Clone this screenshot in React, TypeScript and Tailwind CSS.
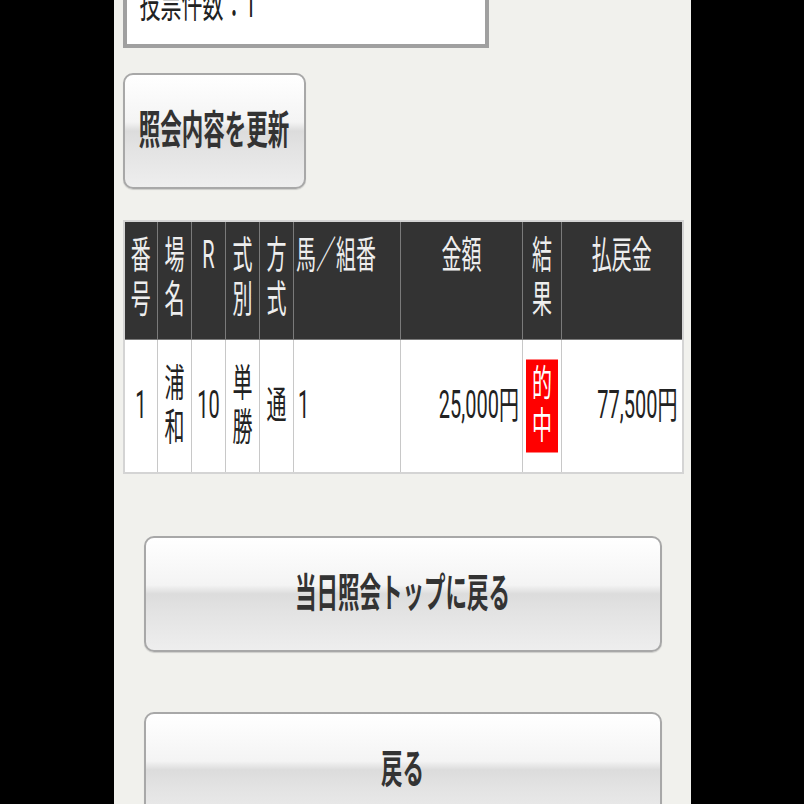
import React from 'react';

const font = "font-[Roboto,'Noto_Sans_CJK_JP',sans-serif]";

const btn =
  'flex items-center justify-center rounded-[10px] border-2 border-[#a8a8a8] bg-[linear-gradient(180deg,#ffffff_0%,#f4f4f4_42%,#dcdcdc_50%,#e3e3e3_66%,#eeeeee_100%)] shadow-[0_1px_1px_rgba(0,0,0,0.15)]';

function Label({ text }: { text: string }) {
    return (
        <span className="inline-block scale-y-[1.85] text-[21.5px] font-bold leading-[24px] text-[#333]">
            {text}
        </span>
    );
}

function Head({ children, align = 'text-center' }: { children: React.ReactNode; align?: string }) {
    return (
        <th className={`border border-[#7a7a7a] bg-[#333333] p-0 pt-[12px] align-top font-normal text-[#eeeeee] ${align}`}>
            <div className="origin-top scale-y-[1.9] text-[20px] leading-[23px]">{children}</div>
        </th>
    );
}

function Cell({ children, align = 'text-center', pad = '' }: { children: React.ReactNode; align?: string; pad?: string }) {
    return (
        <td className={`border border-[#c8c8c8] bg-white p-0 align-middle ${align} ${pad}`}>
            <div className="scale-y-[1.9] text-[20px] leading-[23px] text-[#222]">{children}</div>
        </td>
    );
}

export default function App() {
    return (
        <div className={`flex h-[804px] w-[804px] justify-center overflow-hidden bg-black ${font}`}>
            <div className="flex w-[577px] flex-col overflow-hidden bg-[#f1f1ed]">
                {/* summary box, cut off at the top */}
                <div className="-mt-[52px] ml-[9px] h-[100px] w-[366px] shrink-0 border-4 border-[#a0a0a0] bg-white pl-[13px] pt-[40px]">
                    <span className="inline-block scale-y-[1.85] text-[21px] leading-[24px] text-[#222]">投票件数：1</span>
                </div>

                <button className={`${btn} ml-[9px] mt-[25px] h-[116px] w-[183px] shrink-0`}>
                    <Label text="照会内容を更新" />
                </button>

                <table className="ml-[9px] mt-[31px] w-[561px] shrink-0 table-fixed border-collapse border-2 border-[#d4d4d4]">
                    <colgroup>
                        <col className="w-[34px]" />
                        <col className="w-[34px]" />
                        <col className="w-[34px]" />
                        <col className="w-[34px]" />
                        <col className="w-[34px]" />
                        <col className="w-[107px]" />
                        <col className="w-[122px]" />
                        <col className="w-[39px]" />
                        <col className="w-[121px]" />
                    </colgroup>
                    <thead>
                        <tr className="h-[118px]">
                            <Head>番<br />号</Head>
                            <Head>場<br />名</Head>
                            <Head>R</Head>
                            <Head>式<br />別</Head>
                            <Head>方<br />式</Head>
                            <Head align="text-left pl-[2px]">馬／組番</Head>
                            <Head>金額</Head>
                            <Head>結<br />果</Head>
                            <Head>払戻金</Head>
                        </tr>
                    </thead>
                    <tbody>
                        <tr className="h-[134px]">
                            <Cell>1</Cell>
                            <Cell>浦<br />和</Cell>
                            <Cell>10</Cell>
                            <Cell>単<br />勝</Cell>
                            <Cell>通</Cell>
                            <Cell align="text-left" pad="pl-[4px]">1</Cell>
                            <Cell align="text-right" pad="pr-[3px]">25,000円</Cell>
                            <td className="border border-[#c8c8c8] bg-white p-0 align-middle">
                                <div className="mx-auto w-[32px] scale-y-[1.86] bg-[#ff0000] py-[2px] text-center text-[20px] leading-[23px] text-white">
                                    的<br />中
                                </div>
                            </td>
                            <Cell align="text-right" pad="pr-[4px]">77,500円</Cell>
                        </tr>
                    </tbody>
                </table>

                <button className={`${btn} ml-[30px] mt-[62px] h-[116px] w-[518px] shrink-0`}>
                    <Label text="当日照会トップに戻る" />
                </button>

                <button className={`${btn} ml-[30px] mt-[60px] h-[116px] w-[518px] shrink-0`}>
                    <Label text="戻る" />
                </button>
            </div>
        </div>
    );
}
